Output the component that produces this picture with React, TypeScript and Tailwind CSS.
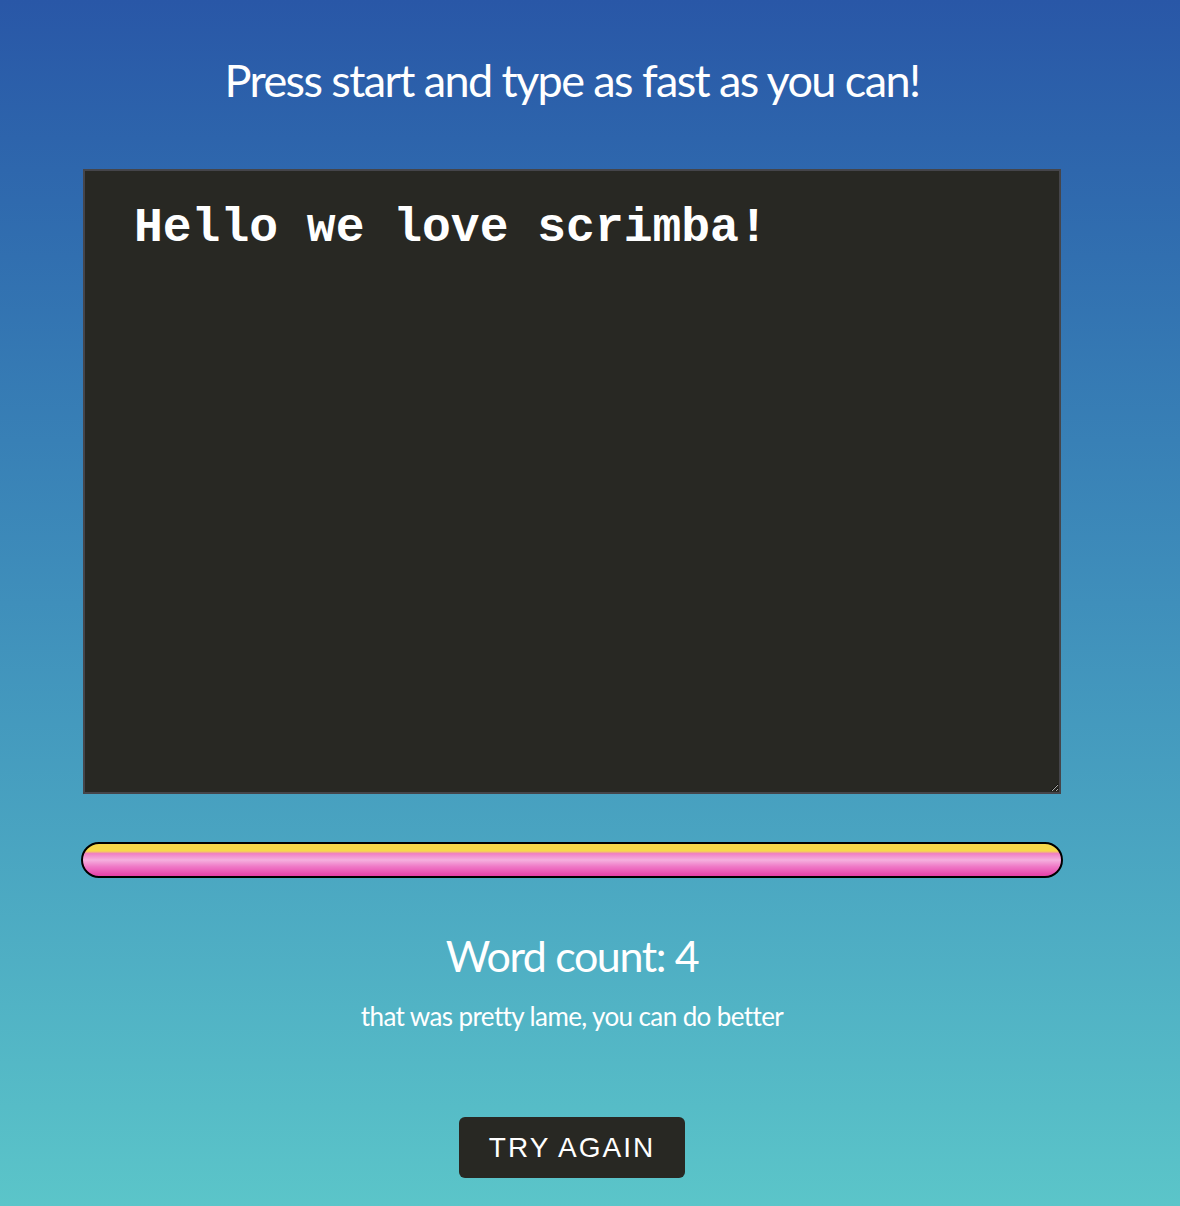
import React from "react";

export default function App() {
  const text = "Hello we love scrimba!";
  const words = text.trim().split(" ").filter((w) => w !== "").length;

  return (
    <div className="w-full min-h-[1206px] bg-gradient-to-b from-[#2957a7] via-[#3f8fbb] to-[#5bc5c9] font-['Lato',sans-serif] text-white">
      <div className="w-[1144px] flex flex-col items-center">
        {/* Heading */}
        <h1 className="mt-[50px] text-[45px] leading-[60px] font-normal tracking-[-1.6px]">
          Press start and type as fast as you can!
        </h1>

        {/* Typing area */}
        <textarea
          defaultValue={text}
          spellCheck={false}
          className="mt-[59px] w-[978px] h-[625px] bg-[#282823] border-2 border-[#45454a] px-[49px] pt-[27px] pb-[30px] text-[48px] leading-[60px] font-bold text-white font-['Liberation_Mono',monospace] resize-y outline-none"
        />

        {/* Timer bar */}
        <div className="mt-[48px] w-[982px] h-[36px] rounded-full border-2 border-black bg-[linear-gradient(to_bottom,#f6d84a_0%,#f6d84a_22%,#f07fc4_30%,#f5b0de_50%,#ef7ac7_70%,#e63fa8_100%)]" />

        {/* Results */}
        <h2 className="mt-[50px] text-[43px] leading-[56px] font-normal tracking-[-1.4px]">
          Word count: {words}
        </h2>
        <p className="mt-[14px] text-[26px] leading-[36px] tracking-[-0.6px]">
          that was pretty lame, you can do better
        </p>

        <button className="mt-[83px] w-[226px] h-[61px] rounded-[6px] bg-[#282823] text-[28px] tracking-[2px] font-['Liberation_Sans',sans-serif] text-white">
          TRY AGAIN
        </button>
      </div>
    </div>
  );
}
